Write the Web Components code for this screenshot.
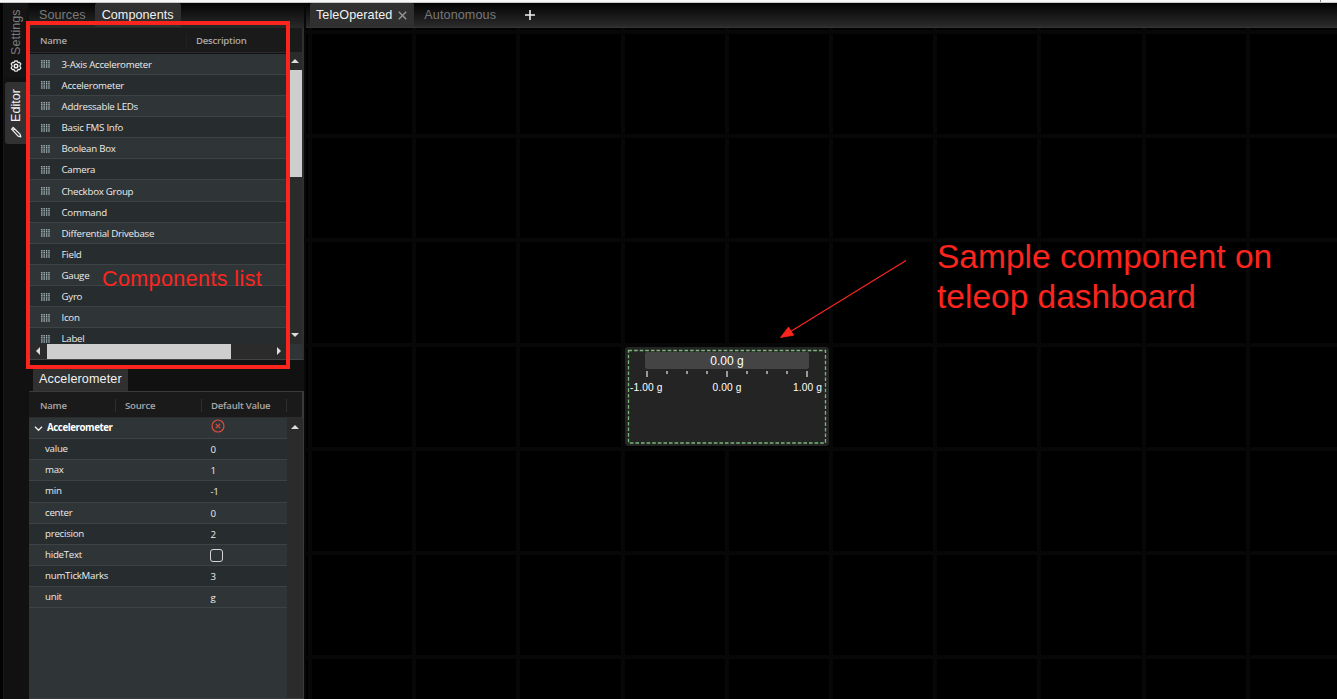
<!DOCTYPE html>
<html lang="en">
<head>
<meta charset="utf-8">
<title>Dashboard editor</title>
<style>
html,body{margin:0;height:100%;overflow:hidden;background:#000}
</style>
</head>
<body>
<dash-app></dash-app>
<script>
const define = (name, html, setup) => {
  customElements.define(name, class extends HTMLElement {
    connectedCallback() {
      if (this.shadowRoot) return;
      const root = this.attachShadow({ mode: 'open' });
      const t = document.createElement('template');
      t.innerHTML = typeof html === 'function' ? html(this) : html;
      root.append(t.content.cloneNode(true));
      if (setup) setup(this, root);
    }
  });
};

/* Tab shown in the horizontal tab bars */
define('dash-tab', `
<style>
:host{display:flex;box-sizing:border-box;align-items:center;height:100%;color:#797979;font:12.6px/24px "Liberation Sans",Arial,sans-serif;white-space:nowrap;letter-spacing:var(--ls,0.06px)}
:host([active]){background:#303030;color:#f2f2f2;border-radius:2px 2px 0 0}
svg{margin-left:6px}
:host(:not([closable])) svg{display:none}
</style><slot></slot><svg width="9" height="9" viewBox="0 0 9 9" stroke="#999" stroke-width="1.3"><path d="M.8 .8L8.2 8.2M8.2 .8L.8 8.2"/></svg>`);

/* Rotated tab of the left rail */
define('rail-tab', `
<style>
:host{display:flex;box-sizing:border-box;writing-mode:vertical-rl;transform:rotate(180deg);width:22px;align-items:center;color:#7b7b7b;font:12.6px/14px "Liberation Sans",Arial,sans-serif;background:#141414;white-space:nowrap}
:host([active]){background:#323232;color:#f4f4f4;border-radius:0 3px 3px 0}
span{display:block}
::slotted(svg){flex:none;transform:rotate(180deg)}
</style><slot name="icon"></slot><span><slot></slot></span>`);

/* Row of the component list */
define('component-row', `
<style>
:host{display:flex;box-sizing:border-box;align-items:center;height:21.15px;padding:2px 0 0 12px;border-bottom:1px solid #3d4244;background:#2f3436;color:#ececec;font:var(--row-font);white-space:nowrap;letter-spacing:var(--row-ls)}
:host(:nth-of-type(even)){background:#272c2e}
svg{margin:0 11.5px 1px 0;flex:none}
</style><svg width="9" height="8" viewBox="0 0 9 8" stroke="#a3b3b5" stroke-width="1.4"><path stroke-dasharray="1.5 .6" d="M.8 0v8M3.2 0v8M5.6 0v8M8 0v8"/></svg><slot></slot>`);

/* Row of the property table */
define('property-row', `
<style>
:host{display:grid;box-sizing:border-box;grid-template-columns:166px 1fr;align-items:center;height:21.14px;padding-left:16px;border-bottom:1px solid #3d4244;background:#272c2e;color:#ececec;font:var(--row-font);white-space:nowrap;letter-spacing:var(--row-ls)}
:host(:nth-of-type(odd)){background:#2f3436}
:host([head]){grid-template-columns:177px 1fr;padding-left:5px;font-weight:700;color:#fff;letter-spacing:-.42px}
.n{display:flex;align-items:center;gap:4px}
.v{display:flex;align-items:center;padding-top:2px;margin-left:-.6px}
:host([head]) .v{padding:0 0 4px 1px}
:host(:not([head])) .chev{display:none}
::slotted(b){display:block;box-sizing:border-box;width:13px;height:13px;border:1.3px solid #d5d5d5;border-radius:3px}
</style><div class="n"><svg class="chev" width="9" height="9" viewBox="0 0 9 9" fill="none" stroke="#eee" stroke-width="1.4"><path d="M1 2.8l3.5 3.5L8 2.8"/></svg><slot></slot></div><div class="v"><slot name="value"></slot></div>`);

/* Column heading with separators */
define('grid-head', `
<style>
:host{display:grid;box-sizing:border-box;align-items:center;grid-template-columns:var(--cols);background:#1a1a1a;color:#a8a8a8;font:600 9.6px/14px "Open Sans","Noto Sans",sans-serif;letter-spacing:-.24px;border-bottom:1px solid #2c2c2c}
::slotted(span){padding-left:var(--pad,9px);border-left:1px solid var(--sep,#2e2e2e);height:13px;line-height:13px;white-space:nowrap}
::slotted(span:first-child){border-left:0 !important;padding-left:11px !important}
</style><slot></slot>`);

define('scroll-bar', el => {
  const h = el.hasAttribute('horizontal');
  return `
<style>
:host{display:flex;box-sizing:border-box;background:#2b2b2b;${h ? 'flex-direction:row;height:16px' : 'flex-direction:column;width:16px'};align-items:stretch}
.a{flex:none;display:flex;align-items:center;justify-content:center;${h ? 'width:17px' : 'height:17px'}}
.track{flex:1;display:flex;${h ? '' : 'flex-direction:column'}}
.thumb{background:#cecece;${h ? 'width' : 'height'}:${el.getAttribute('thumb') || 0}px}
</style>
<div class="a"><svg width="8" height="8" viewBox="0 0 8 8" fill="#ddd"><path d="${h ? 'M6 0v8L2 4z' : 'M0 6h8L4 2z'}"/></svg></div>
<div class="track"><div class="thumb"></div></div>
${el.hasAttribute('noend') ? '' : `<div class="a"><svg width="8" height="8" viewBox="0 0 8 8" fill="#ddd"><path d="${h ? 'M2 0v8l4-4z' : 'M0 2h8L4 6z'}"/></svg></div>`}`;
});

define('component-list', `
<style>
:host{display:flex;flex-direction:column;height:332px;box-sizing:border-box;border-right:2px solid #303030;border-bottom:1px solid #444}
grid-head{--cols:157px 1fr;--sep:#222;height:24.6px;flex:none;padding-top:1px}
.body{display:grid;grid-template-columns:258px 1fr;grid-template-rows:291.4px 15px;flex:1}
.rows{overflow:hidden;padding-top:1px}
scroll-bar[horizontal]{height:15px;padding-left:.5px}
.corner{background:#2f3436}
scroll-bar:not([horizontal]){width:15px;padding-left:1px}
</style>
<grid-head><span>Name</span><span>Description</span></grid-head>
<div class="body"><div class="rows">${['3-Axis Accelerometer','Accelerometer','Addressable LEDs','Basic FMS Info','Boolean Box','Camera','Checkbox Group','Command','Differential Drivebase','Field','Gauge','Gyro','Icon','Label'].map(n => `<component-row>${n}</component-row>`).join('')}</div>
<scroll-bar thumb="107"></scroll-bar><scroll-bar horizontal thumb="184"></scroll-bar><div class="corner"></div></div>`);

define('property-table', `
<style>
:host{display:flex;flex-direction:column;flex:1;box-sizing:border-box;border:1px solid #3b3b3b;border-width:1px 2px 1px 0;background:#2f3436}
grid-head{--cols:86px 86px 85px 1fr;height:26px;flex:none;padding-top:1px}
.body{display:grid;grid-template-columns:258px 1fr;flex:1}
</style>
<grid-head><span>Name</span><span>Source</span><span>Default Value</span><span></span></grid-head>
<div class="body"><div>
<property-row head>Accelerometer<svg slot="value" width="14" height="14" viewBox="0 0 14 14" fill="none" stroke="#db4c40" stroke-width="1.2"><circle cx="7" cy="7" r="6"/><path d="M4.8 4.8l4.4 4.4M9.2 4.8L4.8 9.2"/></svg></property-row>
${[['value','0'],['max','1'],['min','-1'],['center','0'],['precision','2'],['hideText',null],['numTickMarks','3'],['unit','g']].map(([n, v]) => `<property-row>${n}${v === null ? '<b slot="value"></b>' : `<span slot="value">${v}</span>`}</property-row>`).join('')}
</div><scroll-bar noend></scroll-bar></div>`);

define('side-rail', `
<style>
:host{display:flex;flex-direction:column;box-sizing:border-box;width:29px;padding-left:5px;background:linear-gradient(90deg,#030303 0 3px,#171717 3px 4px,#111 4px)}
.s{height:75px;padding-top:6px;margin-bottom:4px}.e{height:62px;padding-top:6px}
</style>
<rail-tab class="s"><svg slot="icon" width="12" height="12" viewBox="0 0 12 12" style="margin-bottom:5px" fill="none" stroke="#eee"><path stroke-width="1.2" stroke-linejoin="round" d="M6 .8L7.5 1.1L7.9 2.6L9.5 2.3L10.9 4L10 5.4V6.6L10.9 8L9.5 9.7L7.9 9.4L7.5 10.9L6 11.2L4.5 10.9L4.1 9.4L2.5 9.7L1.1 8L2 6.6V5.4L1.1 4L2.5 2.3L4.1 2.6L4.5 1.1z"/><circle cx="6" cy="6" r="1.8" stroke-width="1.5"/></svg>Settings</rail-tab>
<rail-tab class="e" active><svg slot="icon" width="12" height="12" viewBox="0 0 12 12" style="margin-bottom:4px" fill="none" stroke="#eee" stroke-width="1.3" stroke-linejoin="round"><path d="M1.6 3.1L3.2 1.5L10 8.1L10.8 10.8L8.1 10.1z M2.9 4.6L4.7 2.8"/></svg>Editor</rail-tab>`);

define('side-panel', `
<style>
:host{display:flex;flex-direction:column;width:275px;background:#111;box-sizing:border-box;--row-font:9.7px/14px "Open Sans","Noto Sans",sans-serif;--row-ls:-.25px}
.tabs{display:flex;height:25px;box-sizing:border-box;padding:0 0 1px 4px;background:linear-gradient(#050505,#2a2a2a)}
.tabs dash-tab:first-child{padding:0 9px 0 6px}
.tabs dash-tab:last-child{padding:0 7px}
.second{display:flex;height:23px;margin-top:8px;padding-left:4px;flex:none}
.second dash-tab{padding:0 6px 1px;--ls:.12px}
</style>
<div class="tabs"><dash-tab>Sources</dash-tab><dash-tab active>Components</dash-tab></div>
<component-list></component-list>
<div class="second"><dash-tab active>Accelerometer</dash-tab></div>
<property-table></property-table>`);

define('accelerometer-widget', `
<style>
:host{display:block;box-sizing:border-box;width:204px;height:99px;padding:2px;background:#242424;border-radius:3px;font:10px/12px "Liberation Sans",Arial,sans-serif;color:#fff}
.in{position:relative;box-sizing:border-box;height:95px;padding:3px 17px}
.in>svg{position:absolute;left:0;top:0}
.bar{height:17px;line-height:18px;margin:0 1px;background:#444;border-radius:2px;text-align:center;font-size:12px}
.ticks{display:flex;justify-content:space-between;height:8px;margin:2px 2px 0 2px}
.ticks i{width:1.6px;height:3px;background:#999}
.ticks i:nth-child(4n+1){height:6px}
.labels{display:grid;grid-template-columns:1fr 1fr 1fr;margin:3px -12px 0 -14px;font-size:10.2px;letter-spacing:.12px}
.labels span:nth-child(2){text-align:center;margin-right:-2px}.labels span:nth-child(3){text-align:right}
</style>
<div class="in"><svg width="200" height="95" fill="none"><rect x="1.5" y="1.5" width="197" height="92.5" stroke="#79b879" stroke-width="1.3" stroke-dasharray="3.6 2"/></svg>
<div class="bar">0.00 g</div><div class="ticks">${'<i></i>'.repeat(9)}</div>
<div class="labels"><span>-1.00 g</span><span>0.00 g</span><span>1.00 g</span></div></div>`);

define('dash-canvas', `
<style>
:host{display:block;position:relative;flex:1;overflow:hidden;background:repeating-linear-gradient(90deg,#070707 0 4px,transparent 4px 104.2px) 2px 0,repeating-linear-gradient(#070707 0 4px,transparent 4px 104.2px) 0 2px #000}
accelerometer-widget{position:absolute;left:319px;top:319px}
</style><accelerometer-widget></accelerometer-widget>`);

define('dash-app', `
<style>
:host{display:flex;flex-direction:column;position:relative;width:1337px;height:699px;overflow:hidden;background:#000}
.top{height:3px;box-sizing:border-box;background:linear-gradient(90deg,transparent 1320px,#888 1320px 1321px,transparent 1321px),#f7f8fa;border-bottom:1px solid #c8c8c8;flex:none}
.main{display:flex;flex:1;min-height:0}
.gap{width:2px;background:#080808}
.work{display:flex;flex-direction:column;flex:1}
.tabs{display:flex;height:25px;box-sizing:border-box;padding-left:4px;background:linear-gradient(#030303,#2b2b2b);border-bottom:1px solid #353535}
.tabs dash-tab[active]{padding:0 7px 0 6px}
.tabs dash-tab:nth-child(2){padding-left:10px;--ls:.1px}
.plus{align-self:center;margin-left:29px}
.box{position:absolute;left:26px;top:21px;width:264px;height:348px;box-sizing:border-box;border:4px solid #fc251e}
.note{position:absolute;color:#fc251e;font-family:"Liberation Sans",Arial,sans-serif;white-space:nowrap}
.n1{left:102px;top:266px;font-size:21.5px;line-height:26px;letter-spacing:.4px}
.n2{left:937px;top:237px;font-size:33.5px;line-height:40px}
.arrow{position:absolute;left:775px;top:255px}
</style>
<div class="top"></div>
<div class="main"><side-rail></side-rail><side-panel></side-panel><div class="gap"></div>
<div class="work"><div class="tabs"><dash-tab active closable>TeleOperated</dash-tab><dash-tab>Autonomous</dash-tab><svg class="plus" width="10" height="10" viewBox="0 0 10 10" stroke="#eee" stroke-width="1.6"><path d="M5 0v10M0 5h10"/></svg></div><dash-canvas></dash-canvas></div></div>
<div class="box"></div>
<div class="note n1">Components list</div>
<div class="note n2">Sample component on<br>teleop dashboard</div>
<svg class="arrow" width="135" height="90" viewBox="0 0 135 90" fill="#fc251e" stroke="#fc251e"><path d="M131 5.5L14 77.5" stroke-width="1.3"/><path d="M5.5 82.5L13.5 72L18.7 80.2z" stroke-width=".8"/></svg>`);
</script>
</body>
</html>
